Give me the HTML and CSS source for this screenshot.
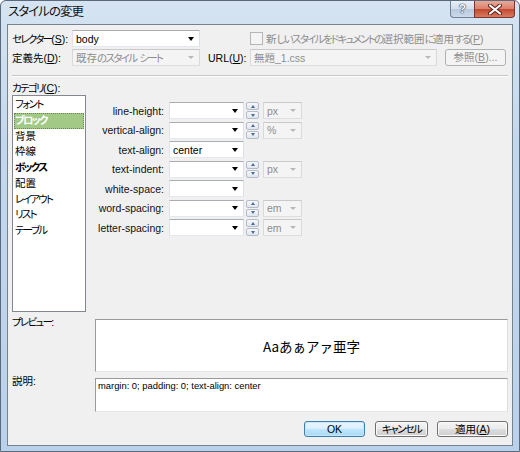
FILE: index.html
```html
<!DOCTYPE html>
<html lang="ja">
<head>
<meta charset="utf-8">
<title>スタイルの変更</title>
<link rel="stylesheet" href="styles.css">
</head>
<body>
<div class="window">
  <div class="titlebar">
    <span class="title">スタイルの変更</span>
    <div class="caption">
      <div class="cap-help">?</div>
      <div class="cap-close">
        <svg width="14" height="11" viewBox="0 0 14 11"><path d="M2 1.5 L12 9.5 M12 1.5 L2 9.5" stroke="#5a1d14" stroke-width="4" stroke-linecap="round"/><path d="M2 1.5 L12 9.5 M12 1.5 L2 9.5" stroke="#fff" stroke-width="2.2" stroke-linecap="round"/></svg>
      </div>
    </div>
  </div>
  <div class="client">
    <div class="top-grid">
      <span class="lbl"><span class="k">セレクター</span>(<u>S</u>):</span>
      <div class="combo"><span class="val">body</span><span class="arrow"></span></div>
      <span></span>
      <div class="check-wrap"><span class="checkbox"></span><span class="dis">新<span class="k">しいスタイルをドキュメントの</span>選択範囲<span class="k">に</span>適用<span class="k">する</span>(<u>P</u>)</span></div>
      <span class="lbl">定義先(<u>D</u>):</span>
      <div class="combo disabled"><span class="val">既存<span class="k">のスタイル</span>&nbsp;<span class="k">シート</span></span><span class="arrow"></span></div>
      <span class="lbl url">URL(<u>U</u>):</span>
      <div class="combo disabled"><span class="val">無題_1.css</span><span class="arrow"></span></div>
      <span></span>
      <div class="btn disabled-btn">参照(<u>B</u>)...</div>
    </div>
    <div class="sep"></div>
    <div class="cat-label"><span class="k">カテゴリ</span>(<u>C</u>):</div>
    <div class="main">
      <ul class="listbox">
        <li class="k">フォント</li>
        <li class="k sel">ブロック</li>
        <li>背景</li>
        <li>枠線</li>
        <li class="k bold">ボックス</li>
        <li>配置</li>
        <li class="k">レイアウト</li>
        <li class="k">リスト</li>
        <li class="k">テーブル</li>
      </ul>
      <div class="props">
        <div class="prow">
          <span class="plabel">line-height:</span>
          <div class="combo"><span class="val"></span><span class="arrow"></span></div>
          <div class="spin"><span class="up"></span><span class="down"></span></div>
          <div class="combo unit disabled"><span class="val">px</span><span class="arrow"></span></div>
        </div>
        <div class="prow">
          <span class="plabel">vertical-align:</span>
          <div class="combo"><span class="val"></span><span class="arrow"></span></div>
          <div class="spin"><span class="up"></span><span class="down"></span></div>
          <div class="combo unit disabled"><span class="val">%</span><span class="arrow"></span></div>
        </div>
        <div class="prow">
          <span class="plabel">text-align:</span>
          <div class="combo"><span class="val">center</span><span class="arrow"></span></div>
        </div>
        <div class="prow">
          <span class="plabel">text-indent:</span>
          <div class="combo"><span class="val"></span><span class="arrow"></span></div>
          <div class="spin"><span class="up"></span><span class="down"></span></div>
          <div class="combo unit disabled"><span class="val">px</span><span class="arrow"></span></div>
        </div>
        <div class="prow">
          <span class="plabel">white-space:</span>
          <div class="combo"><span class="val"></span><span class="arrow"></span></div>
        </div>
        <div class="prow">
          <span class="plabel">word-spacing:</span>
          <div class="combo"><span class="val"></span><span class="arrow"></span></div>
          <div class="spin"><span class="up"></span><span class="down"></span></div>
          <div class="combo unit disabled"><span class="val">em</span><span class="arrow"></span></div>
        </div>
        <div class="prow">
          <span class="plabel">letter-spacing:</span>
          <div class="combo"><span class="val"></span><span class="arrow"></span></div>
          <div class="spin"><span class="up"></span><span class="down"></span></div>
          <div class="combo unit disabled"><span class="val">em</span><span class="arrow"></span></div>
        </div>
      </div>
    </div>
    <div class="preview-row">
      <span class="side-lbl"><span class="k">プレビュー</span>:</span>
      <div class="preview-box">Aaあぁアァ亜字</div>
    </div>
    <div class="desc-row">
      <span class="side-lbl">説明:</span>
      <div class="desc-box">margin: 0; padding: 0; text-align: center</div>
    </div>
    <div class="buttons">
      <div class="btn ok">OK</div>
      <div class="btn cancel"><span class="k">キャンセル</span></div>
      <div class="btn apply">適用(<u>A</u>)</div>
    </div>
  </div>
</div>
</body>
</html>
```

FILE: styles.css
```css
* { box-sizing: border-box; }
html, body { margin: 0; padding: 0; }
body {
  width: 520px;
  height: 452px;
  overflow: hidden;
  background: #ffffff;
  font-family: "Liberation Sans", "Noto Sans CJK JP", sans-serif;
  font-size: 10.5px;
  font-feature-settings: "palt";
  color: #000;
}
u { text-decoration: underline; text-underline-offset: 1px; }
.k { letter-spacing: -1.7px; }

.window {
  width: 520px;
  height: 452px;
  display: flex;
  flex-direction: column;
  border: 1px solid #5b6a7b;
  border-radius: 6px 6px 0 0;
  background: linear-gradient(180deg, #d6e4f2 0%, #c4d8ed 30%, #b9d1eb 100%);
}

.titlebar {
  height: 23px;
  display: flex;
  justify-content: space-between;
  align-items: flex-start;
  padding-left: 7px;
}
.title {
  font-size: 12.5px;
  line-height: 22px;
  color: #111;
  letter-spacing: -1px;
}
.caption { display: flex; margin-right: 4px; }
.cap-help {
  width: 24px;
  height: 17px;
  border: 1px solid #6f8198;
  border-top: none;
  border-right: none;
  border-radius: 0 0 0 4px;
  background: linear-gradient(180deg, #e9f0f8 0%, #d2deec 48%, #b9c9de 52%, #cbd9e9 100%);
  color: #f4f6f9;
  font-weight: bold;
  font-size: 12px;
  line-height: 16px;
  text-align: center;
  text-shadow: 0 0 1px #33455c, 0 0 1px #33455c, 0 0 1px #33455c;
}
.cap-close {
  width: 41px;
  height: 17px;
  border: 1px solid #7e3428;
  border-top: none;
  border-radius: 0 0 4px 0;
  background: linear-gradient(180deg, #eaa899 0%, #d9826d 48%, #c5472f 52%, #d77a61 100%);
  display: flex;
  align-items: center;
  justify-content: center;
}

.client {
  flex: 1;
  margin: 0 6px 5px 6px;
  border: 1px solid #76838f;
  background: #f0f0f0;
  padding: 5px 4px 0 4px;
  display: flex;
  flex-direction: column;
}

.top-grid {
  display: grid;
  grid-template-columns: 60px 128px 50px 187px 8px 61px;
  grid-template-rows: 17px 17px;
  row-gap: 2px;
  align-items: center;
}
.lbl { white-space: nowrap; font-size: 10.5px; }
.url { padding-left: 8px; }

.combo {
  height: 17px;
  display: flex;
  align-items: center;
  background: #fff;
  border: 1px solid;
  border-color: #abadb3 #dbdfe6 #e3e9ef #e2e3ea;
  padding: 0 5px 0 3px;
}
.combo .val { flex: 1; white-space: nowrap; overflow: hidden; }
.combo .arrow {
  width: 0; height: 0;
  border-left: 3.5px solid transparent;
  border-right: 3.5px solid transparent;
  border-top: 4px solid #000;
}
.combo.disabled {
  background: #f4f4f4;
  border-color: #c9c9c9 #d9d9d9 #dedede #d9d9d9;
  color: #8d8d8d;
}
.combo.disabled .arrow {
  border-top-color: #b8b8b8;
  border-left-width: 3px;
  border-right-width: 3px;
  border-top-width: 3px;
}
.check-wrap {
  grid-column: 4 / 7;
  display: flex;
  align-items: center;
  gap: 3px;
  white-space: nowrap;
}
.checkbox {
  width: 13px; height: 13px;
  border: 1px solid #b5b5b5;
  background: #f4f4f4;
  flex: none;
}
.dis { color: #8d8d8d; }

.btn {
  height: 17px;
  border: 1px solid #707070;
  border-radius: 3px;
  background: linear-gradient(180deg, #f4f4f4 0%, #ebebeb 48%, #dddddd 52%, #cfcfcf 100%);
  text-align: center;
  line-height: 15px;
  white-space: nowrap;
  box-shadow: inset 0 0 0 1px #fbfbfb;
}
.disabled-btn {
  border-color: #adb2b5;
  background: #f4f4f4;
  color: #8d8d8d;
  box-shadow: none;
}

.sep {
  margin-top: 9px;
  border-top: 1px solid #c6c6c6;
  border-bottom: 1px solid #ffffff;
}
.cat-label {
  margin-top: 5px;
  line-height: 12px;
  height: 12px;
}

.main {
  display: flex;
  margin-top: 1px;
}
.listbox {
  list-style: none;
  margin: 0;
  padding: 1px;
  width: 74px;
  height: 217px;
  background: #fff;
  border: 1px solid #828790;
}
.listbox li {
  height: 15.75px;
  line-height: 15.75px;
  padding-left: 1px;
  font-size: 10.5px;
  white-space: nowrap;
}
.listbox li.sel {
  background: #a2c985;
  color: #fff;
  font-weight: bold;
  outline: 1px dotted #6a8a55;
  outline-offset: -1px;
}
.listbox li.bold { font-weight: bold; }

.props {
  padding-top: 7px;
  display: flex;
  flex-direction: column;
  gap: 2.5px;
}
.prow {
  display: flex;
  align-items: center;
  height: 17px;
}
.plabel {
  width: 78px;
  text-align: right;
  white-space: nowrap;
  margin-right: 5px;
  color: #111;
}
.prow > .combo { width: 75px; }
.spin {
  width: 13px;
  height: 17px;
  margin-left: 2px;
  display: flex;
  flex-direction: column;
  gap: 1px;
}
.spin span {
  flex: 1;
  border: 1px solid #b4bcc8;
  border-radius: 2px;
  background: linear-gradient(180deg, #f6f8fb, #dfe6ee);
  display: flex;
  align-items: center;
  justify-content: center;
}
.spin .up::after {
  content: "";
  border-left: 2.5px solid transparent;
  border-right: 2.5px solid transparent;
  border-bottom: 3px solid #4d6b93;
}
.spin .down::after {
  content: "";
  border-left: 2.5px solid transparent;
  border-right: 2.5px solid transparent;
  border-top: 3px solid #4d6b93;
}
.prow > .combo.unit { width: 39px; margin-left: 4px; }

.preview-row {
  display: flex;
  margin-top: 7px;
}
.side-lbl {
  width: 83px;
  flex: none;
  margin-top: -3px;
  line-height: 12px;
}
.preview-box {
  flex: 1;
  height: 53px;
  background: #fff;
  border: 1px solid;
  border-color: #9a9a9a #dcdcdc #e6e6e6 #9a9a9a;
  display: flex;
  align-items: center;
  justify-content: center;
  padding-left: 20px;
  font-family: "Noto Sans CJK JP", sans-serif;
  font-feature-settings: normal;
  font-size: 13.5px;
}
.desc-row {
  display: flex;
  margin-top: 6px;
}
.desc-box {
  flex: 1;
  height: 34px;
  background: #fff;
  border: 1px solid;
  border-color: #9a9a9a #dcdcdc #e6e6e6 #9a9a9a;
  padding: 1px 2px;
  font-size: 9.4px;
  line-height: 12px;
}

.buttons {
  display: flex;
  justify-content: flex-end;
  margin-top: 9px;
}
.buttons .btn { height: 16px; line-height: 14px; }
.ok {
  width: 61px;
  border-color: #3c7fb1;
  background: linear-gradient(180deg, #eaf6fd 0%, #d9f0fc 48%, #bee6fd 52%, #a7d9f5 100%);
  box-shadow: inset 0 0 0 1px #c6e7fa;
}
.cancel { width: 53px; margin-left: 10px; }
.apply { width: 71px; margin-left: 9px; }
```
